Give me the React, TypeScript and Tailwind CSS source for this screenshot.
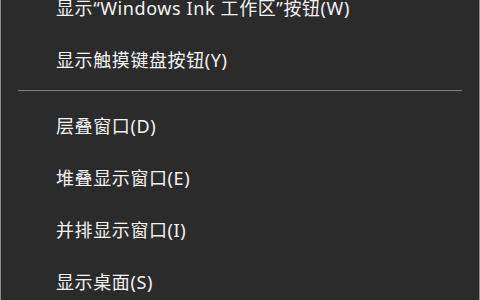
const GROUP_A = ["显示“Windows Ink 工作区”按钮(W)", "显示触摸键盘按钮(Y)"];
const GROUP_B = ["层叠窗口(D)", "堆叠显示窗口(E)", "并排显示窗口(I)", "显示桌面(S)"];

function Item({ label }: { label: string }) {
  return (
    <div className="h-[52px] flex items-center pl-[55px] text-[18px] tracking-[0.6px] leading-none text-[#f2f2f2] whitespace-nowrap">
      {label}
    </div>
  );
}

export default function App() {
  return (
    <div
      className="w-[480px] h-[300px] overflow-hidden bg-[#2b2b2b] border-l border-r border-[#8a8a8a]"
      style={{ fontFamily: '"Noto Sans", "Noto Sans CJK SC", sans-serif' }}
    >
      <div className="-mt-[18px]">
        {GROUP_A.map((l) => (
          <Item key={l} label={l} />
        ))}
        <div className="mt-[4px] mb-[9px] mx-[17px] h-px bg-[#808080]" />
        {GROUP_B.map((l) => (
          <Item key={l} label={l} />
        ))}
      </div>
    </div>
  );
}
